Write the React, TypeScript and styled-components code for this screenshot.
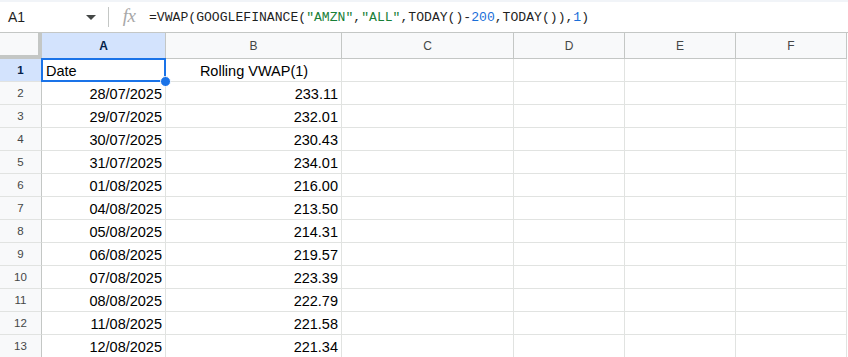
import React from "react";
import styled, { createGlobalStyle } from "styled-components";

const Global = createGlobalStyle`
  html, body { margin: 0; padding: 0; background: #ffffff; }
  body { font-family: "Liberation Sans", Arial, sans-serif; overflow: hidden; }
  * { box-sizing: border-box; }
`;

const Page = styled.div`
  width: 848px;
  height: 357px;
  overflow: hidden;
  display: flex;
  flex-direction: column;
  background: #fff;
`;

const TopStrip = styled.div`
  height: 2px;
  background: #f1f4f8;
  flex: none;
`;

const FormulaBar = styled.div`
  height: 31px;
  flex: none;
  display: flex;
  align-items: center;
  border-bottom: 1px solid #c4c7c5;
`;

const NameBox = styled.div`
  width: 108px;
  height: 100%;
  display: flex;
  align-items: center;
  justify-content: space-between;
  padding: 0 12px 0 8px;
  font-size: 14px;
  color: #1f1f1f;
`;

const Caret = styled.span`
  width: 0;
  height: 0;
  border-left: 5px solid transparent;
  border-right: 5px solid transparent;
  border-top: 5px solid #444746;
  margin-top: 1px;
`;

const Divider = styled.div`
  width: 1px;
  height: 20px;
  background: #c4c7c5;
`;

const FxIcon = styled.span`
  width: 40px;
  display: flex;
  justify-content: center;
  font-family: "Liberation Serif", "Times New Roman", serif;
  font-style: italic;
  font-size: 19px;
  color: #a8a8a8;
  margin-top: -2px;
  letter-spacing: -0.5px;
`;

const Formula = styled.div`
  font-family: "Liberation Mono", "DejaVu Sans Mono", monospace;
  font-size: 13.1px;
  color: #1f1f1f;
  white-space: pre;
`;

const Tok = styled.span<{ $kind: "str" | "num" }>`
  color: ${(p) => (p.$kind === "str" ? "#188038" : "#1a6fd9")};
`;

const Grid = styled.div`
  display: grid;
  grid-template-columns: 42px 124px 176px 172px 111px 111px 111px;
  grid-template-rows: 26px;
  grid-auto-rows: 23px;
`;

const Corner = styled.div`
  background: #f8f9fa;
  border-right: 4px solid #c4c7c5;
  border-bottom: 4px solid #c4c7c5;
`;

const ColHead = styled.div<{ $sel?: boolean }>`
  display: flex;
  align-items: center;
  justify-content: center;
  font-size: 12px;
  padding-top: 1px;
  background: ${(p) => (p.$sel ? "#d3e3fd" : "#f8f9fa")};
  color: ${(p) => (p.$sel ? "#041e49" : "#444746")};
  font-weight: ${(p) => (p.$sel ? 700 : 400)};
  border-right: 1px solid #c4c7c5;
  border-bottom: 1px solid #c4c7c5;
`;

const RowHead = styled.div<{ $sel?: boolean }>`
  display: flex;
  align-items: center;
  justify-content: center;
  font-size: 11.5px;
  background: ${(p) => (p.$sel ? "#d3e3fd" : "#f8f9fa")};
  color: ${(p) => (p.$sel ? "#041e49" : "#444746")};
  font-weight: ${(p) => (p.$sel ? 700 : 400)};
  border-right: 1px solid #c4c7c5;
  border-bottom: 1px solid #e1e3e1;
`;

const Cell = styled.div<{ $align?: "left" | "right" | "center" }>`
  position: relative;
  display: flex;
  align-items: center;
  justify-content: ${(p) =>
    p.$align === "right" ? "flex-end" : p.$align === "center" ? "center" : "flex-start"};
  padding: 1px 3px 0 4px;
  font-size: 14.5px;
  color: #000;
  white-space: nowrap;
  border-right: 1px solid #e1e3e1;
  border-bottom: 1px solid #e1e3e1;
`;

const Selection = styled.div`
  position: absolute;
  left: -1px;
  top: -1px;
  right: -1px;
  bottom: -1px;
  border: 2px solid #1a73e8;
  pointer-events: none;
`;

const Handle = styled.div`
  position: absolute;
  right: -6px;
  bottom: -6px;
  width: 11px;
  height: 11px;
  border-radius: 50%;
  background: #1a73e8;
  border: 1px solid #fff;
  z-index: 2;
`;

const rows: [string, string][] = [
  ["28/07/2025", "233.11"],
  ["29/07/2025", "232.01"],
  ["30/07/2025", "230.43"],
  ["31/07/2025", "234.01"],
  ["01/08/2025", "216.00"],
  ["04/08/2025", "213.50"],
  ["05/08/2025", "214.31"],
  ["06/08/2025", "219.57"],
  ["07/08/2025", "223.39"],
  ["08/08/2025", "222.79"],
  ["11/08/2025", "221.58"],
  ["12/08/2025", "221.34"],
];

const cols = ["A", "B", "C", "D", "E", "F"];

export default function App() {
  return (
    <Page>
      <Global />
      <TopStrip />
      <FormulaBar>
        <NameBox>
          <span>A1</span>
          <Caret />
        </NameBox>
        <Divider />
        <FxIcon>fx</FxIcon>
        <Formula>
          =VWAP(GOOGLEFINANCE(<Tok $kind="str">"AMZN"</Tok>,<Tok $kind="str">"ALL"</Tok>,TODAY()-
          <Tok $kind="num">200</Tok>,TODAY()),<Tok $kind="num">1</Tok>)
        </Formula>
      </FormulaBar>
      <Grid>
        <Corner />
        {cols.map((c) => (
          <ColHead key={c} $sel={c === "A"}>
            {c}
          </ColHead>
        ))}
        <RowHead $sel>1</RowHead>
        <Cell>
          Date
          <Selection />
          <Handle />
        </Cell>
        <Cell $align="center">Rolling VWAP(1)</Cell>
        <Cell />
        <Cell />
        <Cell />
        <Cell />
        {rows.map(([d, v], i) => (
          <React.Fragment key={d}>
            <RowHead>{i + 2}</RowHead>
            <Cell $align="right">{d}</Cell>
            <Cell $align="right">{v}</Cell>
            <Cell />
            <Cell />
            <Cell />
            <Cell />
          </React.Fragment>
        ))}
      </Grid>
    </Page>
  );
}
